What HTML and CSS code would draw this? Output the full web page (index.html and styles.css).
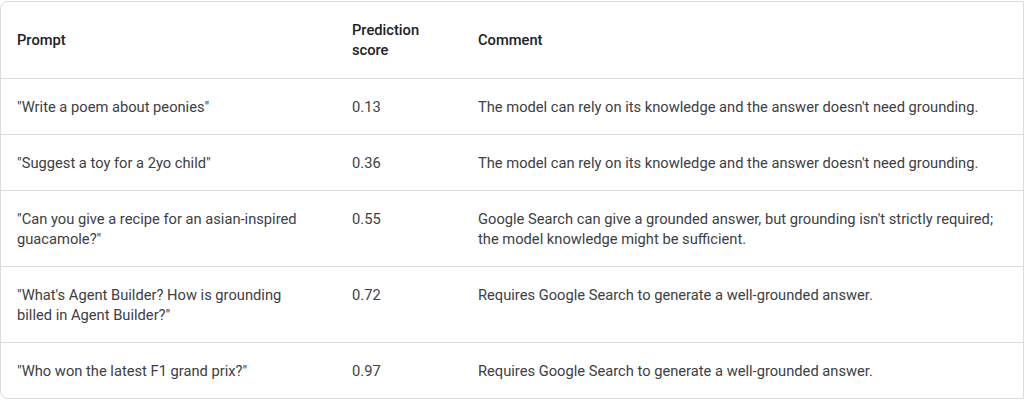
FILE: index.html
```html
<!DOCTYPE html>
<html lang="en">
<head>
<meta charset="utf-8">
<title>Prediction scores</title>
<link rel="stylesheet" href="styles.css">
</head>
<body>
<div class="card">
  <table class="grid">
    <colgroup>
      <col class="c-prompt">
      <col class="c-score">
      <col class="c-comment">
    </colgroup>
    <thead>
      <tr>
        <th>Prompt</th>
        <th>Prediction<br>score</th>
        <th>Comment</th>
      </tr>
    </thead>
    <tbody>
      <tr>
        <td>"Write a poem about peonies"</td>
        <td>0.13</td>
        <td>The model can rely on its knowledge and the answer doesn't need grounding.</td>
      </tr>
      <tr>
        <td>"Suggest a toy for a 2yo child"</td>
        <td>0.36</td>
        <td>The model can rely on its knowledge and the answer doesn't need grounding.</td>
      </tr>
      <tr>
        <td>"Can you give a recipe for an asian-inspired guacamole?"</td>
        <td>0.55</td>
        <td>Google Search can give a grounded answer, but grounding isn't strictly required; the model knowledge might be sufficient.</td>
      </tr>
      <tr>
        <td>"What's Agent Builder? How is grounding billed in Agent Builder?"</td>
        <td>0.72</td>
        <td>Requires Google Search to generate a well-grounded answer.</td>
      </tr>
      <tr>
        <td>"Who won the latest F1 grand prix?"</td>
        <td>0.97</td>
        <td>Requires Google Search to generate a well-grounded answer.</td>
      </tr>
    </tbody>
  </table>
</div>
</body>
</html>
```
FILE: styles.css
```css
html, body {
  margin: 0;
  padding: 0;
  background: #ffffff;
}
body {
  font-family: Roboto, "Liberation Sans", Arial, sans-serif;
  font-size: 14.7px;
  line-height: 20px;
  color: #3c4043;
  overflow: hidden;
}
.card {
  margin-top: 1px;
  width: 1024px;
  box-sizing: border-box;
  border: 1px solid #dadce0;
  border-radius: 8px 0 0 8px;
  overflow: hidden;
}
.grid {
  width: 100%;
  border-collapse: collapse;
  table-layout: fixed;
}
.c-prompt { width: 335px; }
.c-score { width: 126px; }
.grid th,
.grid td {
  text-align: left;
  vertical-align: top;
  padding: 18px 16px 17px;
}
.grid th:first-child,
.grid td:first-child {
  padding-right: 26px;
}
.grid th {
  font-weight: 500;
  color: #202124;
  padding-top: 18px;
  padding-bottom: 18px;
  vertical-align: middle;
}
.grid tbody tr {
  border-top: 1px solid #dadce0;
}
```
